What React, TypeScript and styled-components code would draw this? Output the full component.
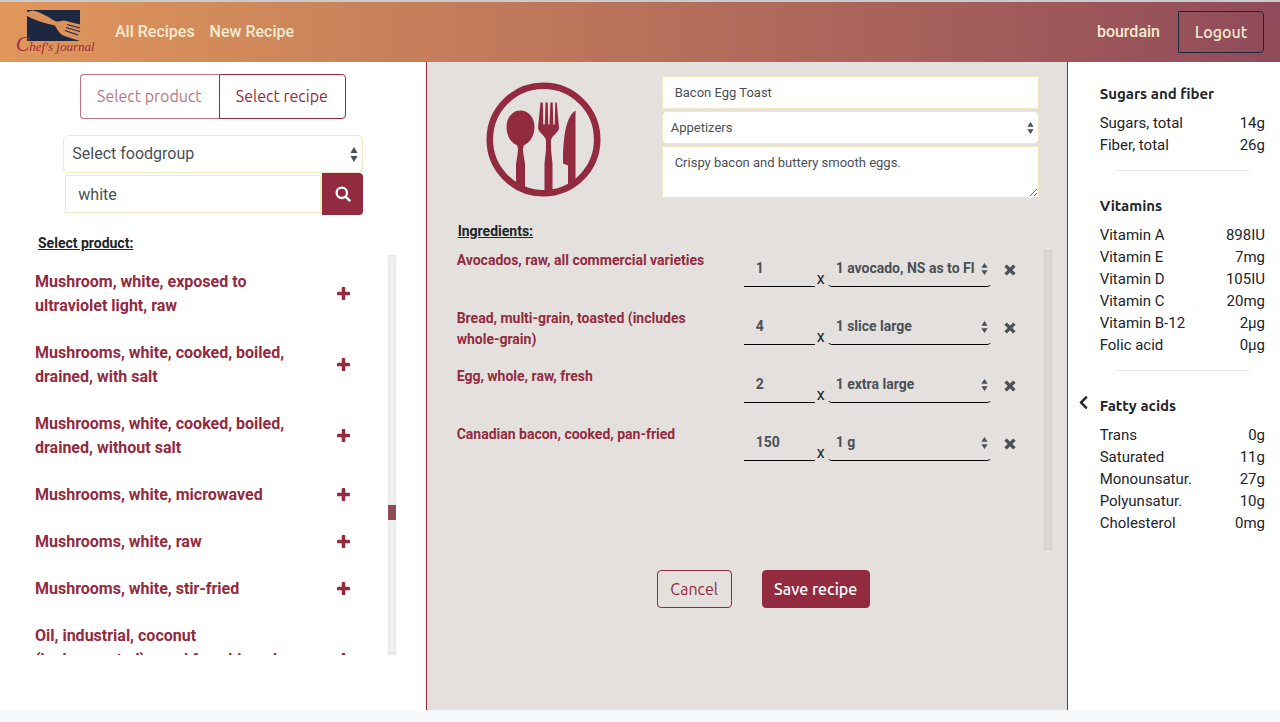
import React from "react";
import styled, { createGlobalStyle, css } from "styled-components";
import { FaChevronLeft } from "react-icons/fa";

const wine = "#932b40";
const navy = "#1d2740";
const cream = "#f5ead0";
const creamLine = "#f3e8c4";
const ink = "#212529";
const slate = "#495057";
const displayFont = 'Ubuntu, "Noto Sans", "Open Sans", sans-serif';

const GlobalStyle = createGlobalStyle`
  *, *::before, *::after { box-sizing: border-box; }
  body {
    margin: 0;
    background: #f8f9fa;
    color: ${ink};
    font: 400 16px/24px Roboto, "Liberation Sans", sans-serif;
  }
  button, input, select, textarea { font: inherit; margin: 0; }
  button { cursor: pointer; }
`;

const Page = styled.div`
  display: flex;
  flex-direction: column;
  min-height: 100vh;
  padding-bottom: 12px;
`;

const Navbar = styled.nav`
  display: flex;
  align-items: center;
  height: 62px;
  padding: 0 16px;
  border-top: 2px solid #c9cbcc;
  background: linear-gradient(to right, #e0975b, #904b5a);
  background-clip: padding-box;
`;

const NavLink = styled.a`
  margin-right: 15px;
  color: ${cream};
  font-weight: 500;
  text-decoration: none;
`;

const Brand = styled.a`
  display: flex;
  width: 83px;
  margin-right: 16px;
`;

const User = styled.span`
  margin: 0 18px 0 auto;
  color: ${cream};
  font-weight: 500;
`;

const LogoutButton = styled.button`
  width: 86px;
  height: 42px;
  padding: 0;
  border: 1px solid ${navy};
  border-radius: 0 4px 4px 0;
  background: transparent;
  color: ${cream};
  font-family: ${displayFont};
  font-weight: 500;
`;

const Columns = styled.main`
  display: grid;
  flex: 1;
  grid-template-columns: minmax(0, 4fr) minmax(0, 6fr) minmax(0, 2fr);
  background: #fff;
`;

const Finder = styled.section`
  padding: 12px 0 55px;
`;

const Toggle = styled.div`
  display: flex;
  justify-content: center;
`;

const ToggleButton = styled.button<{ $side: "left" | "right" }>`
  height: 45px;
  padding: 0 2px 2px 0;
  border: 1px solid ${wine};
  background: #fff;
  color: ${wine};
  font-family: ${displayFont};
  ${(p) =>
    p.$side === "left"
      ? css`
          width: 139px;
          border-right: 0;
          border-radius: 4px 0 0 4px;
          opacity: 0.65;
        `
      : css`
          width: 127px;
          border-radius: 0 4px 4px 0;
        `}
`;

const Search = styled.form`
  width: 300px;
  margin: 16px auto 0;
`;

const SelectWrap = styled.div`
  display: grid;
  align-items: center;
  > * { grid-area: 1 / 1; }
`;

const Select = styled.select`
  appearance: none;
  width: 100%;
  height: 38px;
  padding: 0 16px 0 8px;
  border: 1px solid ${creamLine};
  border-radius: 5px;
  background: #fff;
  color: ${slate};
`;

const ArrowIcon = styled.svg<{ $inset: number }>`
  justify-self: end;
  margin-right: ${(p) => p.$inset}px;
  fill: ${slate};
  pointer-events: none;
`;

const SearchRow = styled.div`
  display: flex;
  align-items: center;
  padding-left: 2px;
`;

const TextInput = styled.input`
  flex: 1;
  min-width: 0;
  height: 38px;
  margin-right: 1px;
  padding: 0 12px;
  border: 1px solid ${creamLine};
  background: #fff;
  color: ${slate};
`;

const SearchButton = styled.button`
  display: flex;
  align-items: center;
  justify-content: center;
  width: 41px;
  height: 42px;
  padding: 0;
  border: 0;
  border-radius: 0 4px 4px 0;
  background: ${wine};
  color: #fff;
`;

const ListTitle = styled.h2`
  margin: 0;
  font-size: 14px;
  font-weight: 700;
  line-height: 24px;
  text-decoration: underline;
`;

const ProductTitle = styled(ListTitle)`
  margin-top: 16px;
  padding-left: 38px;
`;

const ScrollArea = styled.div`
  display: flex;
  overflow: hidden;
`;

const ProductArea = styled(ScrollArea)`
  height: 400px;
  margin: 0 31px 0 35px;
`;

const ScrollTrack = styled.div<{ $tone: string }>`
  flex: none;
  width: 8px;
  background: ${(p) => p.$tone};
  box-shadow: inset 0 0 4px rgba(0, 0, 0, 0.08);
`;

const ScrollThumb = styled.div`
  height: 15px;
  margin-top: 250px;
  background: #904b5a;
`;

const Products = styled.ul`
  display: flex;
  flex: 1;
  flex-direction: column;
  gap: 23px;
  margin: 0;
  padding: 15px 38px 0 0;
  list-style: none;
`;

const Product = styled.li`
  display: flex;
  align-items: center;
  justify-content: space-between;
  color: ${wine};
  font-weight: 700;
`;

const ProductName = styled.span`
  width: 260px;
`;

const IconButton = styled.button`
  display: flex;
  padding: 0;
  border: 0;
  background: transparent;
  color: inherit;
`;

const AddButton = styled(IconButton)`
  padding-bottom: 2px;
`;

const Editor = styled.section`
  margin: 0 -1px;
  padding: 14px 15px 0 30px;
  border: solid ${wine};
  border-width: 0 1px;
  background: #e4e0dd;
`;

const Summary = styled.div`
  display: flex;
  justify-content: space-between;
  padding: 0 13px 0 28px;
`;

const Plate = styled.svg`
  margin-top: 5px;
`;

const Fields = styled.div`
  display: flex;
  flex-direction: column;
  gap: 2px;
  width: 377px;
  font-size: 13px;
  line-height: 18px;
  ${TextInput}, ${Select} { height: 33px; }
  ${TextInput} { flex: none; margin: 0; }
`;

const Description = styled.textarea`
  display: block;
  height: 52px;
  padding: 7px 12px;
  border: 1px solid ${creamLine};
  background: #fff;
  color: ${slate};
`;

const IngredientTitle = styled(ListTitle)`
  margin-top: 21px;
  padding-left: 1px;
`;

const IngredientArea = styled(ScrollArea)`
  height: 300px;
  margin-top: 7px;
`;

const Ingredients = styled.ul`
  display: flex;
  flex: 1;
  flex-direction: column;
  gap: 16px;
  margin: 0;
  padding: 0 25px 0 0;
  list-style: none;
`;

const Ingredient = styled.li`
  display: flex;
  height: 42px;
  font-size: 14px;
  font-weight: 700;
  line-height: 21px;
`;

const IngredientName = styled.span`
  flex: 1;
  padding-right: 28px;
  color: ${wine};
`;

const Amount = styled.input`
  width: 71px;
  height: 37px;
  padding: 0 12px;
  border: 0;
  border-bottom: 1px solid #000;
  border-radius: 0;
  background: transparent;
  color: ${slate};
`;

const Times = styled.span`
  width: 12px;
  padding-top: 18px;
  font-size: 16px;
  font-weight: 400;
  text-align: center;
`;

const Measure = styled(SelectWrap)`
  width: 165px;
  height: 37px;
  margin-right: 12px;
  ${Select} {
    height: 37px;
    border-color: transparent;
    border-bottom-color: #000;
    background: transparent;
  }
`;

const RemoveButton = styled(IconButton)`
  align-items: center;
  height: 40px;
  padding-right: 3px;
  color: ${slate};
`;

const Actions = styled.div`
  display: flex;
  justify-content: center;
  gap: 30px;
  margin: 20px 0 40px;
  padding-left: 18px;
`;

const ActionButton = styled.button<{ $primary?: boolean }>`
  width: ${(p) => (p.$primary ? 108 : 75)}px;
  height: 38px;
  padding: 0;
  border: 1px solid ${wine};
  border-radius: 4px;
  background: ${(p) => (p.$primary ? wine : "transparent")};
  color: ${(p) => (p.$primary ? "#fff" : wine)};
  font-family: ${displayFont};
  font-weight: ${(p) => (p.$primary ? 500 : 400)};
`;

const Nutrition = styled.aside`
  display: flex;
  padding: 0 15px 0 9px;
`;

const CollapseButton = styled(IconButton)`
  flex: none;
  align-self: center;
  width: 24px;
  margin-top: 32px;
`;

const Groups = styled.div`
  flex: 1;
  padding-top: 20px;
`;

const GroupTitle = styled.h3`
  margin: 0 0 6px;
  font: 700 15px/24px ${displayFont};
`;

const Facts = styled.table`
  width: 100%;
  border-collapse: collapse;
  font-size: 15px;
  line-height: 22px;
  th { padding: 0; font-weight: 400; text-align: left; }
  td { padding: 0; text-align: right; }
`;

const Rule = styled.hr`
  height: 1px;
  margin: 14px 15px 23px;
  border: 0;
  background: #e5e5e5;
`;

const Arrows = ({ inset, small }: { inset: number; small?: boolean }) => (
  <ArrowIcon $inset={inset} width={small ? 7 : 8} height={small ? 12 : 15} viewBox="0 0 8 15" preserveAspectRatio="none" aria-hidden="true">
    <path d="M4 0 7.600 6H.4zM4 15 .4 9h7.200z" />
  </ArrowIcon>
);

const PlusIcon = () => (
  <svg width="13" height="13" viewBox="0 0 13 13" fill="currentColor" aria-hidden="true">
    <rect x="0" y="4.700" width="13" height="3.600" rx="0.900" />
    <rect x="4.700" y="0" width="3.600" height="13" rx="0.900" />
  </svg>
);

const CrossIcon = () => (
  <svg width="12" height="12" viewBox="0 0 12 12" fill="none" stroke="currentColor" strokeWidth="3.400" aria-hidden="true">
    <path d="m1.600 1.600 8.800 8.800M10.400 1.600l-8.800 8.800" />
  </svg>
);

const SearchIcon = () => (
  <svg width="16" height="16" viewBox="0 0 16 16" fill="none" stroke="currentColor" aria-hidden="true">
    <circle cx="6.800" cy="6.800" r="5.200" strokeWidth="2.300" />
    <path d="m10.700 10.700 3.700 3.700" strokeWidth="2.600" strokeLinecap="round" />
  </svg>
);

const Logo = () => (
  <svg width="83" height="60" viewBox="0 0 83 60" role="img" aria-label="Chef's journal">
    <rect x="11" y="8" width="53" height="31" fill={navy} />
    <path d="M11 10 17 8.500C24 10 31 14 38 18.500C41 20.500 44 19 48 18.500L64 22.500V39L56 36.500 47 33.500C43 31 41 27 39 23.500C31 21.500 20 19 11 14z" fill="#dc935b" />
    <path d="m51 22.500 13 3.500M50 25.500l14 4M49 28.500l13 4.500" fill="none" stroke={navy} strokeWidth="1.200" />
    <text x="0" y="49" fontFamily='"Liberation Serif", serif' fontSize="13" fontStyle="italic" fill="#a02a41">
      <tspan fontSize="20">C</tspan>hef's journal
    </text>
  </svg>
);

const Cutlery = () => (
  <Plate width="116" height="116" viewBox="0 0 116 116" role="img" aria-label="Recipe picture">
    <defs>
      <clipPath id="plate">
        <circle cx="58" cy="58" r="55" />
      </clipPath>
    </defs>
    <circle cx="58.500" cy="58.500" r="53.700" fill="none" stroke={wine} strokeWidth="6.600" />
    <g fill={wine} clipPath="url(#plate)">
      <path d="M35.500 29.500C43.500 29.500 49.500 36.500 49.500 46C49.500 54.500 45 61.500 39.500 64C37.500 65.500 38 69.500 38.500 73.500L40 82.500V112H31V82.500L32.500 73.500C33 69.500 33.500 65.500 31.500 64C25.500 61.500 21.500 54.500 21.500 46C21.500 36.500 27.500 29.500 35.500 29.500z" />
      <path d="M55.500 21.500H57.800L58.300 43.500H59.800L60.500 21.500H62.800L63.200 43.500H64.500L65.400 21.500H67.700L68.300 43.500H69.700L70.300 21.500H71.800L74 46.500C74 51.500 66.500 54.500 66 59.500V68.500L67.500 82.500V112H59.500V82.500L61 68.500V59.500C60.500 54.500 53 51.500 53 46.500z" />
      <path d="M90.500 29.500V112H83V84.500L78 82.500C78 59.500 80 36.500 90.500 29.500z" />
    </g>
  </Plate>
);

const products = [
  "Mushroom, white, exposed to ultraviolet light, raw",
  "Mushrooms, white, cooked, boiled, drained, with salt",
  "Mushrooms, white, cooked, boiled, drained, without salt",
  "Mushrooms, white, microwaved",
  "Mushrooms, white, raw",
  "Mushrooms, white, stir-fried",
  "Oil, industrial, coconut (hydrogenated), used for whipped toppings",
];

const ingredients = [
  { name: "Avocados, raw, all commercial varieties", amount: "1", measure: "1 avocado, NS as to Florida or California" },
  { name: "Bread, multi-grain, toasted (includes whole-grain)", amount: "4", measure: "1 slice large" },
  { name: "Egg, whole, raw, fresh", amount: "2", measure: "1 extra large" },
  { name: "Canadian bacon, cooked, pan-fried", amount: "150", measure: "1 g" },
];

const groups = [
  { title: "Sugars and fiber", facts: [["Sugars, total", "14g"], ["Fiber, total", "26g"]] },
  {
    title: "Vitamins",
    facts: [
      ["Vitamin A", "898IU"],
      ["Vitamin E", "7mg"],
      ["Vitamin D", "105IU"],
      ["Vitamin C", "20mg"],
      ["Vitamin B-12", "2µg"],
      ["Folic acid", "0µg"],
    ],
  },
  {
    title: "Fatty acids",
    facts: [
      ["Trans", "0g"],
      ["Saturated", "11g"],
      ["Monounsatur.", "27g"],
      ["Polyunsatur.", "10g"],
      ["Cholesterol", "0mg"],
    ],
  },
];

export default function App() {
  return (
    <>
      <GlobalStyle />
      <Page>
        <Navbar>
          <Brand href="#home"><Logo /></Brand>
          <NavLink href="#recipes">All Recipes</NavLink>
          <NavLink href="#new">New Recipe</NavLink>
          <User>bourdain</User>
          <LogoutButton type="button">Logout</LogoutButton>
        </Navbar>
        <Columns>
          <Finder>
            <Toggle>
              <ToggleButton type="button" $side="left">Select product</ToggleButton>
              <ToggleButton type="button" $side="right">Select recipe</ToggleButton>
            </Toggle>
            <Search onSubmit={(e) => e.preventDefault()}>
              <SelectWrap>
                <Select aria-label="Food group">
                  <option>Select foodgroup</option>
                </Select>
                <Arrows inset={5} />
              </SelectWrap>
              <SearchRow>
                <TextInput aria-label="Search products" defaultValue="white" />
                <SearchButton aria-label="Search"><SearchIcon /></SearchButton>
              </SearchRow>
            </Search>
            <ProductTitle>Select product:</ProductTitle>
            <ProductArea>
              <Products>
                {products.map((name) => (
                  <Product key={name}>
                    <ProductName>{name}</ProductName>
                    <AddButton type="button" aria-label={`Add ${name}`}><PlusIcon /></AddButton>
                  </Product>
                ))}
              </Products>
              <ScrollTrack $tone="#f1f1f1"><ScrollThumb /></ScrollTrack>
            </ProductArea>
          </Finder>
          <Editor>
            <Summary>
              <Cutlery />
              <Fields>
                <TextInput aria-label="Recipe name" defaultValue="Bacon Egg Toast" />
                <SelectWrap>
                  <Select aria-label="Category">
                    <option>Appetizers</option>
                  </Select>
                  <Arrows inset={5} small />
                </SelectWrap>
                <Description aria-label="Description" defaultValue="Crispy bacon and buttery smooth eggs." />
              </Fields>
            </Summary>
            <IngredientTitle>Ingredients:</IngredientTitle>
            <IngredientArea>
              <Ingredients>
                {ingredients.map((item) => (
                  <Ingredient key={item.name}>
                    <IngredientName>{item.name}</IngredientName>
                    <Amount aria-label={`Amount of ${item.name}`} defaultValue={item.amount} />
                    <Times>x</Times>
                    <Measure>
                      <Select aria-label={`Measure of ${item.name}`}>
                        <option>{item.measure}</option>
                      </Select>
                      <Arrows inset={4} small />
                    </Measure>
                    <RemoveButton type="button" aria-label={`Remove ${item.name}`}><CrossIcon /></RemoveButton>
                  </Ingredient>
                ))}
              </Ingredients>
              <ScrollTrack $tone="#dadad8" />
            </IngredientArea>
            <Actions>
              <ActionButton type="button">Cancel</ActionButton>
              <ActionButton type="button" $primary>Save recipe</ActionButton>
            </Actions>
          </Editor>
          <Nutrition>
            <CollapseButton type="button" aria-label="Collapse nutrition"><FaChevronLeft size={15} viewBox="0 0 320 512" /></CollapseButton>
            <Groups>
              {groups.map((group, i) => (
                <React.Fragment key={group.title}>
                  {i > 0 && <Rule />}
                  <GroupTitle>{group.title}</GroupTitle>
                  <Facts>
                    <tbody>
                      {group.facts.map(([label, value]) => (
                        <tr key={label}>
                          <th scope="row">{label}</th>
                          <td>{value}</td>
                        </tr>
                      ))}
                    </tbody>
                  </Facts>
                </React.Fragment>
              ))}
            </Groups>
          </Nutrition>
        </Columns>
      </Page>
    </>
  );
}
